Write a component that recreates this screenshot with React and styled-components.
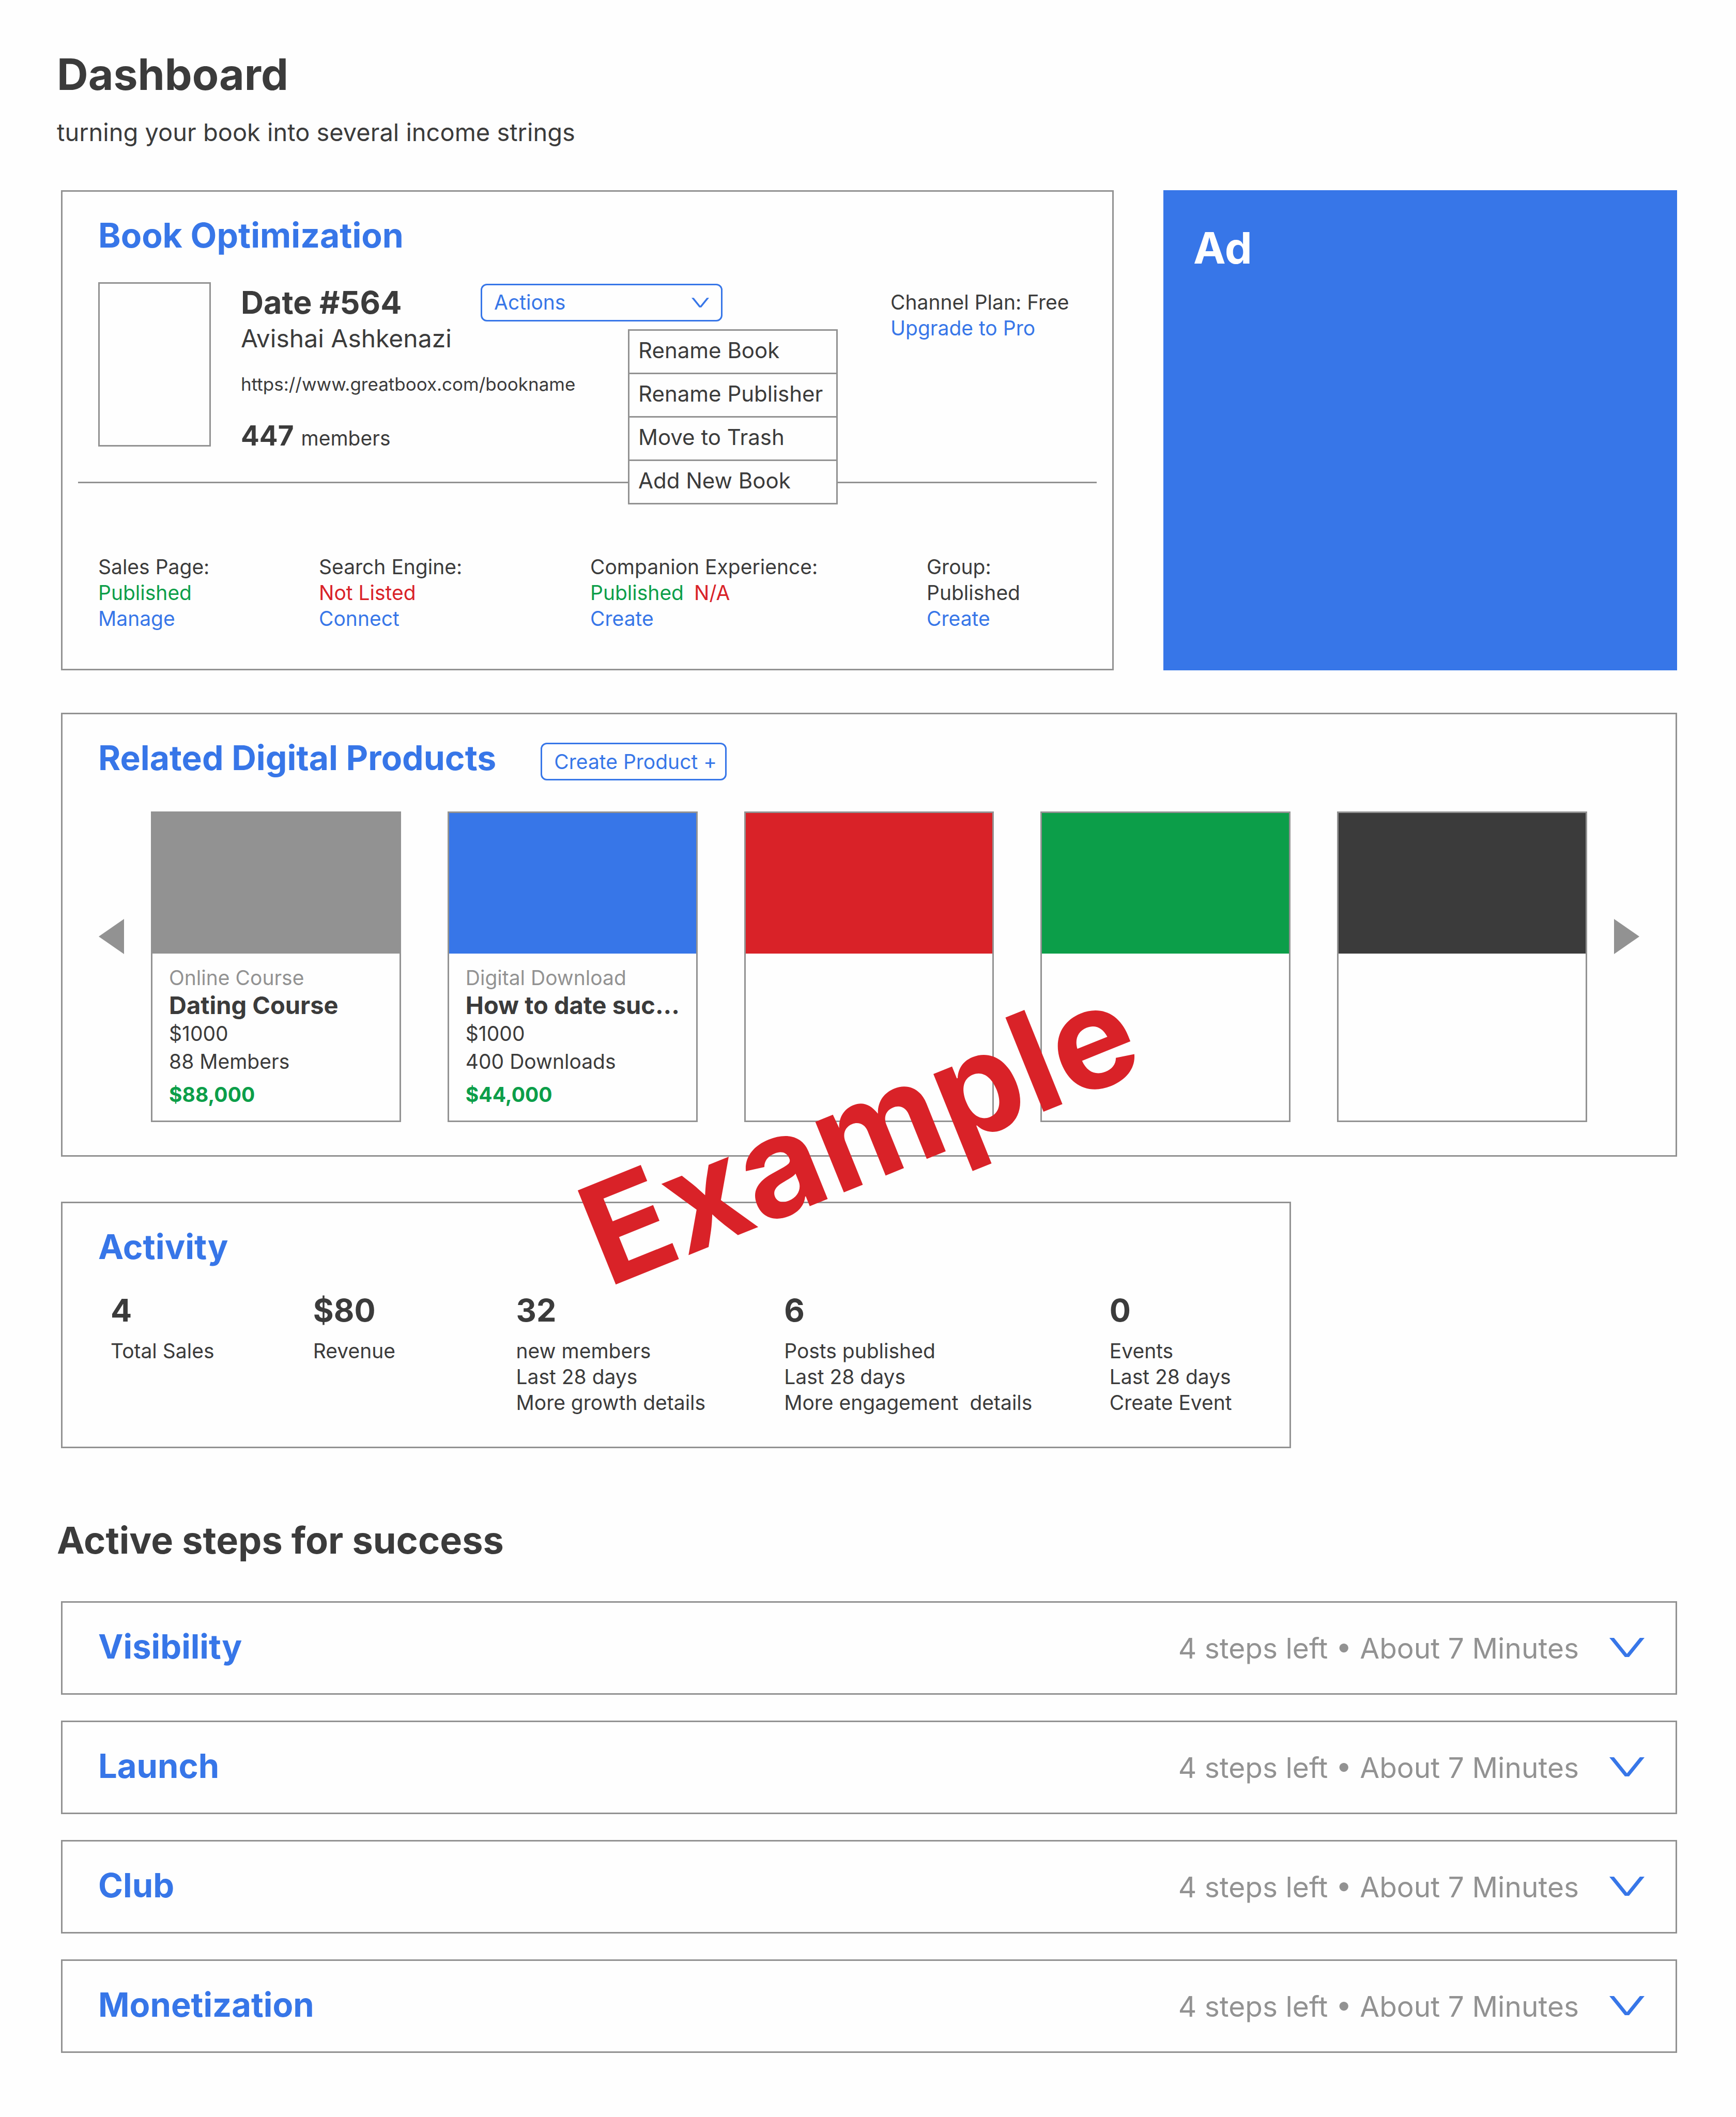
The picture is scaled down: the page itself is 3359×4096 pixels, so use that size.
import React from "react";
import styled, { createGlobalStyle, ThemeProvider } from "styled-components";

const theme = {
  blue: "#3776e8",
  red: "#d92228",
  green: "#0c9e49",
  dark: "#3b3b3b",
  gray: "#929292",
  paper: "#fefefe",
};

const GlobalStyle = createGlobalStyle`
  *, *::before, *::after { box-sizing: border-box; }
  body { margin: 0; background: ${theme.paper}; }
  h1, h2, h3, p, ul { margin: 0; padding: 0; }
  ul { list-style: none; }
  a { color: inherit; text-decoration: none; }
  button { font: inherit; color: inherit; background: none; border: 0; padding: 0; margin: 0; cursor: pointer; }
`;

const Page = styled.main`
  padding: 94px 114px 122px 110px;
  font-family: Inter, "Liberation Sans", sans-serif;
  font-size: 39px;
  line-height: 50px;
  color: ${(p) => p.theme.dark};
`;

const PageTitle = styled.h1`
  font-size: 84px;
  line-height: 100px;
  font-weight: 700;
`;

const Tagline = styled.p`
  margin-top: 32px;
  font-size: 47px;
  line-height: 60px;
`;

const Sections = styled.div`
  padding-left: 8px;
`;

const TopRow = styled.div`
  display: grid;
  grid-template-columns: 2037fr 994fr;
  gap: 96px;
  margin-top: 82px;
`;

const Panel = styled.section`
  border: 3px solid ${(p) => p.theme.gray};
  padding: 44px 69px 0;
`;

const PanelTitle = styled.h2`
  font-size: 66px;
  line-height: 80px;
  font-weight: 700;
  color: ${(p) => p.theme.blue};
`;

const AdPanel = styled.aside`
  padding: 50px 58px;
  background: ${(p) => p.theme.blue};
  color: ${(p) => p.theme.paper};
  font-size: 84px;
  line-height: 124px;
  font-weight: 700;
`;

/* Book optimization */

const BookPanel = styled(Panel)`
  padding-bottom: 72px;
`;

const BookRow = styled.div`
  display: flex;
  align-items: flex-start;
  margin-top: 51px;
`;

const Cover = styled.div`
  flex: none;
  width: 218px;
  height: 318px;
  margin-right: 58px;
  border: 3px solid ${(p) => p.theme.gray};
`;

const BookInfo = styled.div`
  flex: 1;
`;

const NameRow = styled.div`
  display: grid;
  grid-template-columns: 464px 468px;
  align-items: center;
`;

const BookName = styled.h3`
  font-size: 61px;
  line-height: 78px;
  font-weight: 700;
`;

const Author = styled.p`
  font-size: 48px;
  line-height: 62px;
`;

const BookUrl = styled.a`
  display: block;
  margin-top: 35px;
  font-size: 35px;
  line-height: 44px;
`;

const MemberCount = styled.p`
  display: flex;
  align-items: baseline;
  gap: 14px;
  margin-top: 46px;
  line-height: 64px;
`;

const Count = styled.strong`
  font-size: 53px;
  font-weight: 700;
`;

const OutlineButton = styled.button`
  display: flex;
  align-items: center;
  justify-content: space-between;
  width: ${(p) => p.$width};
  height: 73px;
  padding: 0 23px;
  border: 3px solid ${(p) => p.theme.blue};
  border-radius: 12px;
  color: ${(p) => p.theme.blue};
  white-space: nowrap;
`;

const ActionsBox = styled.div`
  position: relative;
`;

const Menu = styled.ul`
  position: absolute;
  z-index: 1;
  top: 88px;
  left: 285px;
  width: 406px;
  border: 3px solid ${(p) => p.theme.gray};
  background: ${(p) => p.theme.paper};
`;

const MenuItem = styled.li`
  & + & {
    border-top: 3px solid ${(p) => p.theme.gray};
  }
`;

const MenuButton = styled.button`
  display: block;
  width: 100%;
  padding: 1px 17px 6px;
  font-size: 42px;
  line-height: 74px;
  text-align: left;
  white-space: nowrap;
`;

const Plan = styled.div`
  flex: none;
  width: 360px;
  padding-top: 14px;
`;

const BlockLink = styled.a`
  display: block;
  color: ${(p) => p.theme[p.$tone || "blue"]};
`;

const Divider = styled.hr`
  height: 3px;
  margin: 52px -39px 0;
  border: 0;
  background: ${(p) => p.theme.gray};
`;

const StatusGrid = styled.div`
  display: grid;
  grid-template-columns: 427fr 525fr 651fr 290fr;
  margin-top: 137px;
`;

const StatusLine = styled.p`
  display: flex;
  gap: 20px;
`;

const Tone = styled.span`
  color: ${(p) => p.theme[p.$tone]};
`;

/* Related products */

const ProductsPanel = styled(Panel)`
  margin-top: 82px;
  padding-bottom: 64px;
`;

const ProductsHead = styled.div`
  display: flex;
  align-items: flex-start;
  gap: 86px;
`;

const HeadAction = styled.div`
  padding-top: 11px;
`;

const Carousel = styled.div`
  display: flex;
  align-items: flex-start;
  gap: 52px;
  margin-top: 60px;
`;

const ArrowButton = styled.button`
  flex: none;
  width: 50px;
  margin-top: 208px;
  color: ${(p) => p.theme.gray};
  svg { display: block; }
`;

const Cards = styled.div`
  flex: 1;
  display: grid;
  grid-template-columns: repeat(5, minmax(0, 1fr));
  gap: 90px;
`;

const Card = styled.article`
  border: 3px solid ${(p) => p.theme.gray};
`;

const CardArt = styled.div`
  height: 272px;
  background: ${(p) => p.theme[p.$tone]};
`;

const CardBody = styled.div`
  padding: 22px 24px 23px 32px;
`;

const ProductName = styled.h3`
  font-size: 47px;
  line-height: 56px;
  font-weight: 700;
  white-space: nowrap;
`;

const CardLine = styled.p`
  line-height: 54px;
`;

const Earned = styled.p`
  margin-top: 10px;
  line-height: 54px;
  font-weight: 700;
  color: ${(p) => p.theme.green};
`;

/* Activity */

const ActivityPanel = styled(Panel)`
  position: relative;
  width: 76.1%;
  margin-top: 87px;
  padding-bottom: 60px;
`;

const StatGrid = styled.div`
  display: grid;
  grid-template-columns: 392fr 393fr 519fr 630fr 279fr;
  margin-top: 46px;
  padding-left: 24px;
`;

const StatValue = styled.strong`
  display: block;
  margin-bottom: 17px;
  font-size: 61px;
  line-height: 74px;
  font-weight: 700;
`;

const StatLine = styled.p`
  white-space: pre;
`;

const Stamp = styled.div`
  position: absolute;
  z-index: 2;
  left: 1054px;
  top: -94px;
  font-size: 270px;
  line-height: 320px;
  font-weight: 700;
  color: ${(p) => p.theme.red};
  transform: rotate(-22deg);
  transform-origin: 0 258px;
  pointer-events: none;
`;

/* Steps */

const StepsTitle = styled.h2`
  margin-top: 134px;
  font-size: 72px;
  line-height: 88px;
  font-weight: 700;
`;

const StepList = styled.div`
  display: grid;
  gap: 50px;
  margin-top: 74px;
  padding-left: 8px;
`;

const Step = styled.button`
  display: flex;
  align-items: center;
  width: 100%;
  height: 181px;
  padding: 0 60px 2px 69px;
  border: 3px solid ${(p) => p.theme.gray};
  text-align: left;
`;

const StepText = styled.span`
  flex: 1;
  display: flex;
  align-items: baseline;
  justify-content: space-between;
  margin-right: 59px;
`;

const StepName = styled.span`
  font-size: 65px;
  line-height: 80px;
  font-weight: 700;
  color: ${(p) => p.theme.blue};
`;

const StepMeta = styled.span`
  font-size: 55px;
  line-height: 80px;
  color: ${(p) => p.theme.gray};
`;

const Chevron = ({ width, height }) => (
  <svg width={width} height={height} viewBox="0 0 68 37" aria-hidden="true">
    <polygon points="0,0 9,0 34,31 59,0 68,0 38,37 30,37" fill={theme.blue} />
  </svg>
);

const Arrow = ({ points }) => (
  <svg width="50" height="68" viewBox="0 0 50 68" aria-hidden="true">
    <polygon points={points} fill="currentColor" />
  </svg>
);

const MENU = ["Rename Book", "Rename Publisher", "Move to Trash", "Add New Book"];

const STATUSES = [
  { label: "Sales Page:", states: [["Published", "green"]], link: "Manage" },
  { label: "Search Engine:", states: [["Not Listed", "red"]], link: "Connect" },
  { label: "Companion Experience:", states: [["Published", "green"], ["N/A", "red"]], link: "Create" },
  { label: "Group:", states: [["Published", "dark"]], link: "Create" },
];

const PRODUCTS = [
  { tone: "gray", kind: "Online Course", name: "Dating Course", price: "$1000", count: "88 Members", earned: "$88,000" },
  { tone: "blue", kind: "Digital Download", name: "How to date suc...", price: "$1000", count: "400 Downloads", earned: "$44,000" },
  { tone: "red" },
  { tone: "green" },
  { tone: "dark" },
];

const STATS = [
  { value: "4", lines: ["Total Sales"] },
  { value: "$80", lines: ["Revenue"] },
  { value: "32", lines: ["new members", "Last 28 days"], link: "More growth details" },
  { value: "6", lines: ["Posts published", "Last 28 days"], link: "More engagement  details" },
  { value: "0", lines: ["Events", "Last 28 days"], link: "Create Event" },
];

const STEPS = ["Visibility", "Launch", "Club", "Monetization"];

export default function App() {
  return (
    <ThemeProvider theme={theme}>
      <GlobalStyle />
      <Page>
        <header>
          <PageTitle>Dashboard</PageTitle>
          <Tagline>turning your book into several income strings</Tagline>
        </header>

        <Sections>
          <TopRow>
            <BookPanel>
              <PanelTitle>Book Optimization</PanelTitle>
              <BookRow>
                <Cover />
                <BookInfo>
                  <NameRow>
                    <BookName>Date #564</BookName>
                    <ActionsBox>
                      <OutlineButton type="button" $width="100%" aria-haspopup="menu" aria-expanded="true">
                        Actions
                        <Chevron width={34} height={19} />
                      </OutlineButton>
                      <Menu>
                        {MENU.map((item) => (
                          <MenuItem key={item}>
                            <MenuButton type="button">{item}</MenuButton>
                          </MenuItem>
                        ))}
                      </Menu>
                    </ActionsBox>
                  </NameRow>
                  <Author>Avishai Ashkenazi</Author>
                  <BookUrl href="https://www.greatboox.com/bookname">https://www.greatboox.com/bookname</BookUrl>
                  <MemberCount>
                    <Count>447</Count>
                    <span>members</span>
                  </MemberCount>
                </BookInfo>
                <Plan>
                  <p>Channel Plan: Free</p>
                  <BlockLink href="#upgrade">Upgrade to Pro</BlockLink>
                </Plan>
              </BookRow>
              <Divider />
              <StatusGrid>
                {STATUSES.map((s) => (
                  <div key={s.label}>
                    <p>{s.label}</p>
                    <StatusLine>
                      {s.states.map(([text, tone]) => (
                        <Tone key={text} $tone={tone}>{text}</Tone>
                      ))}
                    </StatusLine>
                    <BlockLink href="#status">{s.link}</BlockLink>
                  </div>
                ))}
              </StatusGrid>
            </BookPanel>
            <AdPanel>Ad</AdPanel>
          </TopRow>

          <ProductsPanel>
            <ProductsHead>
              <PanelTitle>Related Digital Products</PanelTitle>
              <HeadAction>
                <OutlineButton type="button" $width="360px">Create Product +</OutlineButton>
              </HeadAction>
            </ProductsHead>
            <Carousel>
              <ArrowButton type="button" aria-label="Previous products">
                <Arrow points="1,34 50,0 50,68" />
              </ArrowButton>
              <Cards>
                {PRODUCTS.map((p) => (
                  <Card key={p.tone}>
                    <CardArt $tone={p.tone} />
                    {p.name && (
                      <CardBody>
                        <Tone as="p" $tone="gray">{p.kind}</Tone>
                        <ProductName>{p.name}</ProductName>
                        <CardLine>{p.price}</CardLine>
                        <CardLine>{p.count}</CardLine>
                        <Earned>{p.earned}</Earned>
                      </CardBody>
                    )}
                  </Card>
                ))}
              </Cards>
              <ArrowButton type="button" aria-label="Next products">
                <Arrow points="0,0 49,34 0,68" />
              </ArrowButton>
            </Carousel>
          </ProductsPanel>

          <ActivityPanel>
            <PanelTitle>Activity</PanelTitle>
            <StatGrid>
              {STATS.map((s) => (
                <div key={s.value}>
                  <StatValue>{s.value}</StatValue>
                  {s.lines.map((line) => (
                    <StatLine key={line}>{line}</StatLine>
                  ))}
                  {s.link && (
                    <StatLine>
                      <a href="#activity">{s.link}</a>
                    </StatLine>
                  )}
                </div>
              ))}
            </StatGrid>
            <Stamp>Example</Stamp>
          </ActivityPanel>
        </Sections>

        <StepsTitle>Active steps for success</StepsTitle>
        <StepList>
          {STEPS.map((name) => (
            <Step key={name} type="button" aria-expanded="false">
              <StepText>
                <StepName>{name}</StepName>
                <StepMeta>4 steps left • About 7 Minutes</StepMeta>
              </StepText>
              <Chevron width={68} height={37} />
            </Step>
          ))}
        </StepList>
      </Page>
    </ThemeProvider>
  );
}
